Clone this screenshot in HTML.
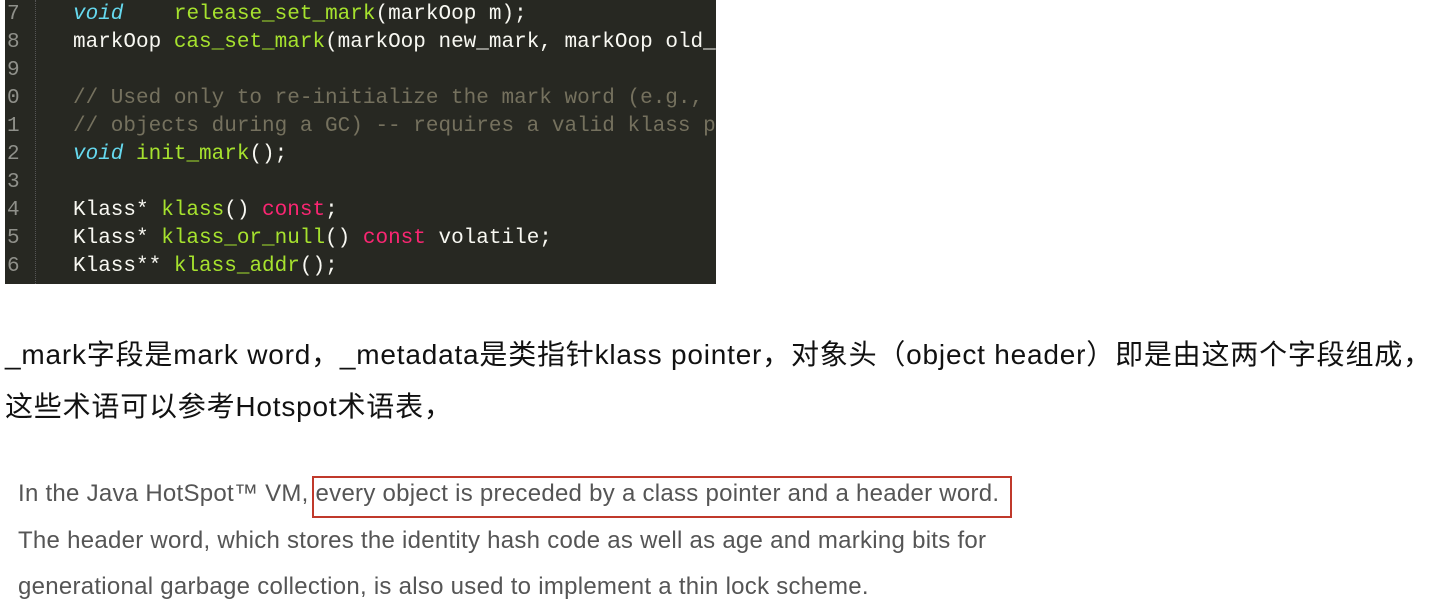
<html><head><style>
body{margin:0;width:1434px;height:609px;background:#fff;overflow:hidden;position:relative;font-family:"Liberation Sans","Noto Sans CJK SC",sans-serif}
.code{position:absolute;left:5px;top:0;width:711px;height:284px;background:#272822;font-family:"Liberation Mono",monospace;font-size:21px;color:#f8f8f2}
.ln{position:absolute;left:2px;color:#8f908a}
.l{position:absolute;left:68px;white-space:pre}
.g{position:absolute;left:30px;top:0;height:284px;border-left:1px dotted #555}
.k{color:#66d9ef;font-style:italic}.f{color:#a6e22e}.c{color:#75715e}.r{color:#f92672}
.p{position:absolute;left:5px;font-size:28px;color:#111;white-space:nowrap;letter-spacing:0.8px}
.e{position:absolute;left:18px;font-size:24px;color:#555;white-space:nowrap;letter-spacing:0.27px}
.box{position:absolute;left:312px;top:476px;width:696px;height:38px;border:2px solid #c0392b}
</style></head><body>
<div class="code"><div class="g"></div>
<div class="ln" style="top:3px">7</div><div class="l" style="top:3px"><span class="k">void</span>    <span class="f">release_set_mark</span>(markOop m);</div>
<div class="ln" style="top:31px">8</div><div class="l" style="top:31px">markOop <span class="f">cas_set_mark</span>(markOop new_mark, markOop old_</div>
<div class="ln" style="top:59px">9</div>
<div class="ln" style="top:87px">0</div><div class="l c" style="top:87px">// Used only to re-initialize the mark word (e.g.,</div>
<div class="ln" style="top:115px">1</div><div class="l c" style="top:115px">// objects during a GC) -- requires a valid klass p</div>
<div class="ln" style="top:143px">2</div><div class="l" style="top:143px"><span class="k">void</span> <span class="f">init_mark</span>();</div>
<div class="ln" style="top:171px">3</div>
<div class="ln" style="top:199px">4</div><div class="l" style="top:199px">Klass* <span class="f">klass</span>() <span class="r">const</span>;</div>
<div class="ln" style="top:227px">5</div><div class="l" style="top:227px">Klass* <span class="f">klass_or_null</span>() <span class="r">const</span> volatile;</div>
<div class="ln" style="top:255px">6</div><div class="l" style="top:255px">Klass** <span class="f">klass_addr</span>();</div>
</div>
<div class="p" style="top:333px">_mark字段是mark word，_metadata是类指针klass pointer，对象头（object header）即是由这两个字段组成，</div>
<div class="p" style="top:385px">这些术语可以参考Hotspot术语表，</div>
<div class="e" style="top:480px">In the Java HotSpot™ VM, every object is preceded by a class pointer and a header word.</div>
<div class="e" style="top:527px">The header word, which stores the identity hash code as well as age and marking bits for</div>
<div class="e" style="top:573px">generational garbage collection, is also used to implement a thin lock scheme.</div>
<div class="box"></div>
</body></html>
